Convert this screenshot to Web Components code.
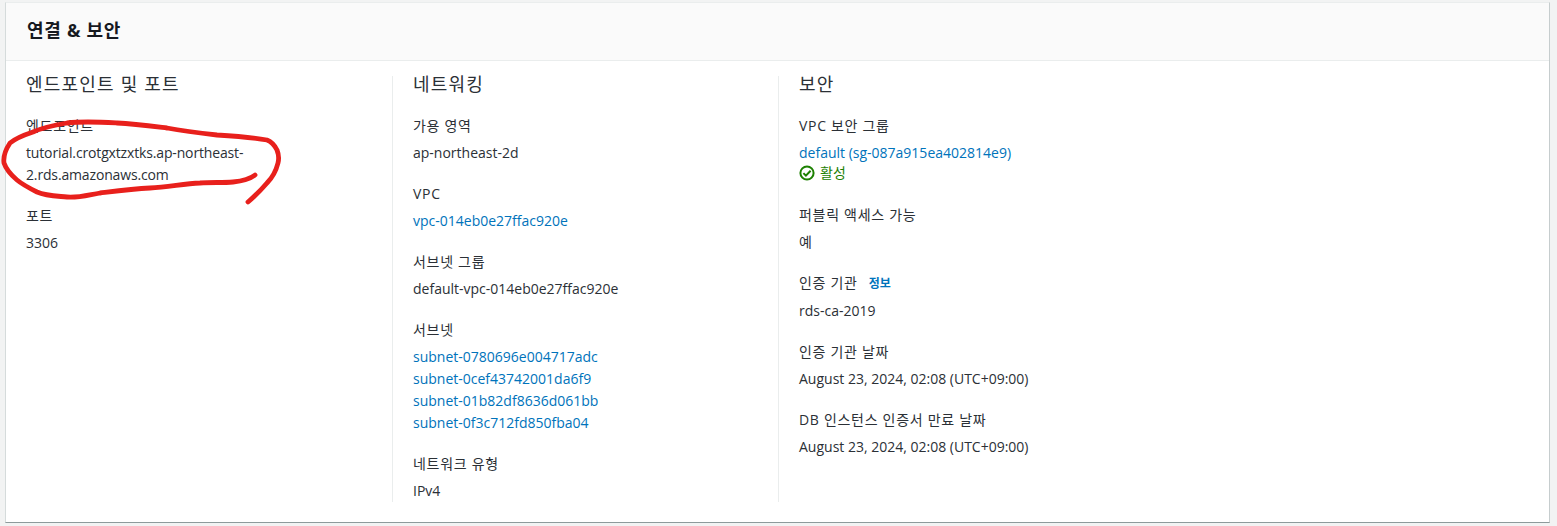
<!DOCTYPE html>
<html lang="ko">
<head>
<meta charset="utf-8">
<title>연결 & 보안</title>
<style>
  html, body { margin: 0; padding: 0; background: #f2f3f3; }
  body {
    height: 526px;
    overflow: hidden;
    font-family: "Open Sans", "Noto Sans CJK KR", sans-serif;
    font-size: 14px;
    color: #2b3036;
  }
</style>
</head>
<body>
<rds-card heading="연결 &amp; 보안">
  <rds-column title="엔드포인트 및 포트">
    <rds-field label="엔드포인트" tight>tutorial.crotgxtzxtks.ap-northeast-2.rds.amazonaws.com</rds-field>
    <rds-field label="포트">3306</rds-field>
  </rds-column>
  <rds-column title="네트워킹">
    <rds-field label="가용 영역">ap-northeast-2d</rds-field>
    <rds-field label="VPC"><rds-link>vpc-014eb0e27ffac920e</rds-link></rds-field>
    <rds-field label="서브넷 그룹">default-vpc-014eb0e27ffac920e</rds-field>
    <rds-field label="서브넷">
      <rds-link block>subnet-0780696e004717adc</rds-link>
      <rds-link block>subnet-0cef43742001da6f9</rds-link>
      <rds-link block>subnet-01b82df8636d061bb</rds-link>
      <rds-link block>subnet-0f3c712fd850fba04</rds-link>
    </rds-field>
    <rds-field label="네트워크 유형">IPv4</rds-field>
  </rds-column>
  <rds-column title="보안">
    <rds-field label="VPC 보안 그룹">
      <rds-link block>default (sg-087a915ea402814e9)</rds-link>
      <rds-status>활성</rds-status>
    </rds-field>
    <rds-field label="퍼블릭 액세스 가능">예</rds-field>
    <rds-field label="인증 기관" info="정보">rds-ca-2019</rds-field>
    <rds-field label="인증 기관 날짜">August 23, 2024, 02:08 (UTC+09:00)</rds-field>
    <rds-field label="DB 인스턴스 인증서 만료 날짜">August 23, 2024, 02:08 (UTC+09:00)</rds-field>
  </rds-column>
</rds-card>

<script>
class RdsCard extends HTMLElement {
  constructor() {
    super();
    this.shadowDOM = this.attachShadow({mode: "open"});
  }
  connectedCallback() {
    this.shadowDOM.innerHTML = `
    <style>
      :host {
        display: block;
        position: relative;
        box-sizing: border-box;
        width: 1545px;
        height: 521px;
        margin: 2px 0 0 5px;
        background: #fff;
        border-left: 1px solid #d5dbdb;
        border-right: 1px solid #c6cdce;
        border-bottom: 1px solid #8d9a9b;
        border-top: 1px solid #eaeded;
      }
      header {
        box-sizing: border-box;
        height: 58px;
        padding: 0 21px 5px;
        display: flex;
        align-items: center;
        background: #fafafa;
        border-bottom: 1px solid #eaeded;
        font-size: 18px;
        font-weight: 700;
        letter-spacing: 0.7px;
        color: #16191f;
      }
      .columns {
        display: grid;
        grid-template-columns: 386px 386px 386px;
        margin-top: 15px;
      }
      svg {
        position: absolute;
        left: -6px;
        top: -3px;
        pointer-events: none;
      }
    </style>
    <header>${this.getAttribute("heading").replace("&", "&amp;")}</header>
    <div class="columns"><slot></slot></div>
    <svg width="300" height="220" viewBox="0 0 300 220" fill="none">
      <path d="M255 175C250 179 242 181 233 182C222 183 212 182 200 183C183 184 168 187 150 188C133 189 117 191 100 193C88 195 78 198 67 197C56 196 46 196 37 192C29 188 23 185 17 180C10 174 6 169 4 163C3 156 6 149 10 143C16 138 24 135 33 132C44 127 55 125 67 123C84 121 100 122 117 123C134 124 150 126 167 128C184 131 200 133 217 135C234 136 250 137 267 140C272 142 275 146 277 150C279 155 279 159 278 163C276 171 272 178 267 183C261 190 255 196 248 202" stroke="#e8201c" stroke-width="4.8" stroke-linecap="round" stroke-linejoin="round"/>
    </svg>
    `;
  }
}

class RdsColumn extends HTMLElement {
  constructor() {
    super();
    this.shadowDOM = this.attachShadow({mode: "open"});
  }
  connectedCallback() {
    this.shadowDOM.innerHTML = `
    <style>
      :host {
        display: block;
        box-sizing: border-box;
        height: 426px;
        padding: 0 20px;
        border-left: 1px solid #eaeded;
      }
      :host(:first-child) { border-left-color: transparent; padding-left: 19px; }
      h3 {
        margin: 0 0 23px;
        font-size: 18px;
        font-weight: 400;
        line-height: 16px;
        color: #2b3036;
        letter-spacing: 1.2px;
      }
      .list { display: flex; flex-direction: column; gap: 19px; }
    </style>
    <h3>${this.getAttribute("title")}</h3>
    <div class="list"><slot></slot></div>
    `;
  }
}

class RdsField extends HTMLElement {
  constructor() {
    super();
    this.shadowDOM = this.attachShadow({mode: "open"});
  }
  connectedCallback() {
    const info = this.getAttribute("info");
    this.shadowDOM.innerHTML = `
    <style>
      :host { display: block; line-height: 22px; }
      :host([tight]) { letter-spacing: -0.15px; }
      .label { margin-bottom: 5px; letter-spacing: 0.7px; }
      .info { margin-left: 11px; font-size: 12px; color: #0073bb; font-weight: 700; letter-spacing: 0; }
    </style>
    <div class="label">${this.getAttribute("label")}${info ? `<span class="info">${info}</span>` : ""}</div>
    <div><slot></slot></div>
    `;
  }
}

class RdsLink extends HTMLElement {
  constructor() {
    super();
    this.shadowDOM = this.attachShadow({mode: "open"});
  }
  connectedCallback() {
    this.shadowDOM.innerHTML = `
    <style>
      :host { display: inline; color: #0073bb; }
      :host([block]) { display: block; }
    </style>
    <slot></slot>
    `;
  }
}

class RdsStatus extends HTMLElement {
  constructor() {
    super();
    this.shadowDOM = this.attachShadow({mode: "open"});
  }
  connectedCallback() {
    this.shadowDOM.innerHTML = `
    <style>
      :host { display: flex; align-items: center; gap: 5px; margin-bottom: 3px; color: #1d8102; line-height: 18px; }
      svg { display: block; }
    </style>
    <svg width="16" height="16" viewBox="0 0 16 16" fill="none" stroke="#1d8102" stroke-width="2">
      <circle cx="8" cy="8" r="6.6"/>
      <path d="M4.4 8.1l2.5 2.5 4.7-4.9"/>
    </svg>
    <span><slot></slot></span>
    `;
  }
}

customElements.define("rds-card", RdsCard);
customElements.define("rds-column", RdsColumn);
customElements.define("rds-field", RdsField);
customElements.define("rds-link", RdsLink);
customElements.define("rds-status", RdsStatus);
</script>
</body>
</html>
